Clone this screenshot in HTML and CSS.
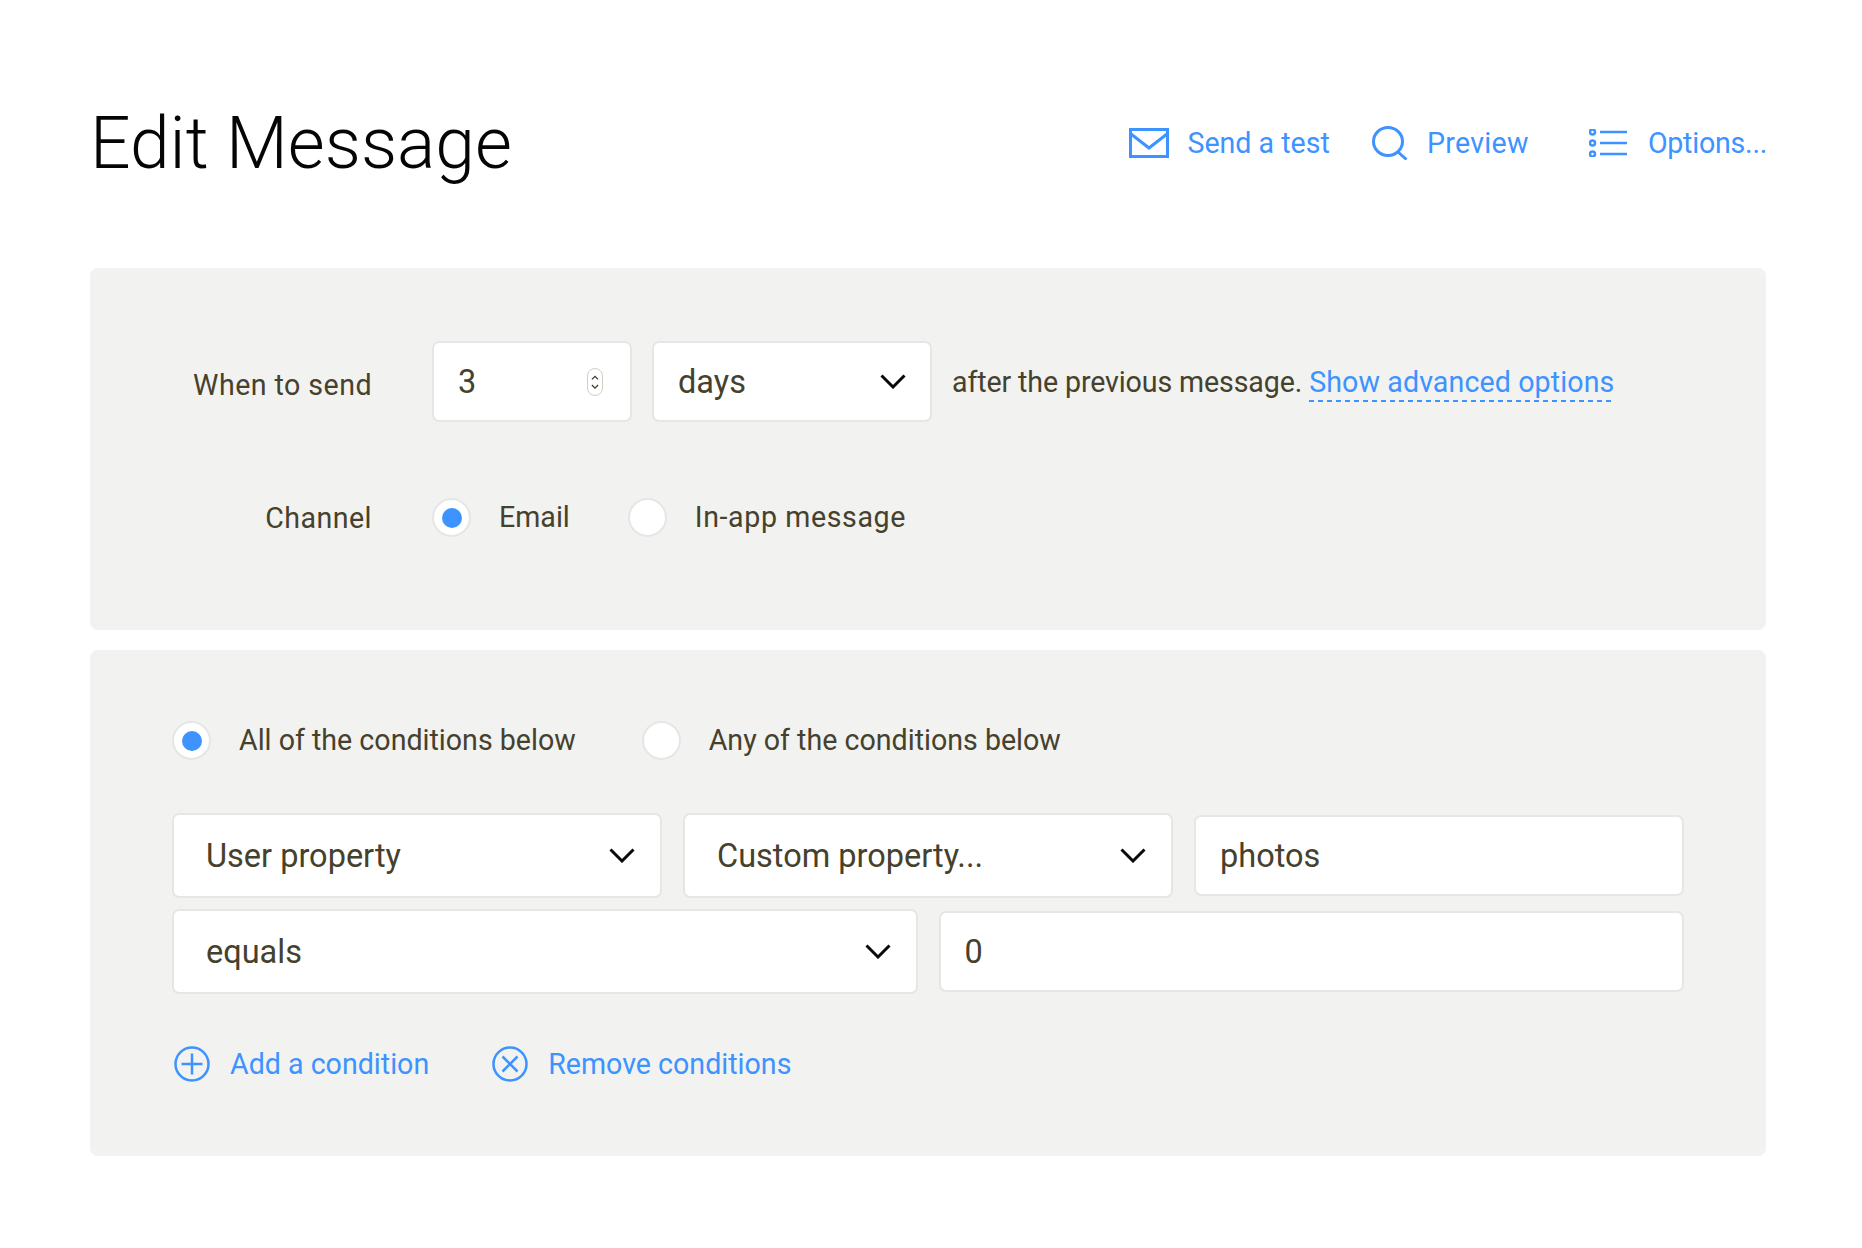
FILE: index.html
```html
<!DOCTYPE html>
<html lang="en">
<head>
<meta charset="utf-8">
<title>Edit Message</title>
<link rel="stylesheet" href="styles.css">
</head>
<body>
<main class="page">
  <header class="header">
    <h1 class="title">Edit Message</h1>
    <nav class="actions">
      <a class="action action-test">
        <svg class="icon-mail" viewBox="0 0 40 30" fill="none" stroke="currentColor" stroke-width="3"><rect x="1.500" y="1.500" width="37" height="27"/><path d="M2 6l18 14L38 6"/></svg>
        <span>Send a test</span>
      </a>
      <a class="action action-preview">
        <svg class="icon-search" viewBox="0 0 36 34" fill="none" stroke="currentColor" stroke-width="3"><ellipse cx="16" cy="15.500" rx="14.500" ry="14"/><path d="M26 26l8.500 7.500"/></svg>
        <span>Preview</span>
      </a>
      <a class="action action-options">
        <svg class="icon-list" viewBox="0 0 38 28" fill="none" stroke="currentColor" stroke-width="2.500"><circle cx="3.500" cy="3" r="2.500"/><circle cx="3.500" cy="14" r="2.500"/><circle cx="3.500" cy="25" r="2.500"/><path d="M11 3h27M11 14h27M11 25h27"/></svg>
        <span>Options...</span>
      </a>
    </nav>
  </header>

  <section class="panel panel-send">
    <div class="send-row">
      <div class="label label-top">When to send</div>
      <div class="control control-number">
        <span>3</span>
        <span class="spinner">
          <svg viewBox="0 0 16 28" fill="none" stroke="#3f3c28" stroke-width="1.500"><path d="M4.500 11L8 7.500l3.500 3.500M4.500 17.500L8 21l3.500-3.500"/></svg>
        </span>
      </div>
      <div class="control control-days">
        <span>days</span>
        <svg class="chevron" viewBox="0 0 26 15" fill="none" stroke="#0a0a0a" stroke-width="3"><path d="M1.500 1.500L13 13 24.500 1.500"/></svg>
      </div>
      <p class="sentence">after the previous message. <a class="adv-link">Show advanced options</a></p>
    </div>
    <div class="send-row channel-row">
      <div class="label">Channel</div>
      <div class="radio-group">
        <label class="radio-item"><span class="radio radio-on"></span><span class="radio-text">Email</span></label>
        <label class="radio-item"><span class="radio"></span><span class="radio-text wide-text">In-app message</span></label>
      </div>
    </div>
  </section>

  <section class="panel panel-conditions">
    <div class="radio-group match-group">
      <label class="radio-item"><span class="radio radio-on"></span><span class="radio-text">All of the conditions below</span></label>
      <label class="radio-item"><span class="radio"></span><span class="radio-text">Any of the conditions below</span></label>
    </div>
    <div class="field-row field-row-first">
      <div class="control select-large">
        <span>User property</span>
        <svg class="chevron" viewBox="0 0 26 15" fill="none" stroke="#0a0a0a" stroke-width="3"><path d="M1.500 1.500L13 13 24.500 1.500"/></svg>
      </div>
      <div class="control select-large">
        <span>Custom property...</span>
        <svg class="chevron" viewBox="0 0 26 15" fill="none" stroke="#0a0a0a" stroke-width="3"><path d="M1.500 1.500L13 13 24.500 1.500"/></svg>
      </div>
      <div class="control text-large">photos</div>
    </div>
    <div class="field-row field-row-second">
      <div class="control select-large">
        <span>equals</span>
        <svg class="chevron" viewBox="0 0 26 15" fill="none" stroke="#0a0a0a" stroke-width="3"><path d="M1.500 1.500L13 13 24.500 1.500"/></svg>
      </div>
      <div class="control text-large">0</div>
    </div>
    <div class="condition-actions">
      <a class="action condition-action">
        <svg class="icon-circle" viewBox="0 0 36 36" fill="none" stroke="currentColor" stroke-width="2.500"><circle cx="18" cy="18" r="16.500"/><path d="M7.500 18h21M18 7.500v21"/></svg>
        <span>Add a condition</span>
      </a>
      <a class="action condition-action">
        <svg class="icon-circle" viewBox="0 0 36 36" fill="none" stroke="currentColor" stroke-width="2.500"><circle cx="18" cy="18" r="16.500"/><path d="M10.500 10.500l15 15M25.500 10.500l-15 15"/></svg>
        <span>Remove conditions</span>
      </a>
    </div>
  </section>
</main>
</body>
</html>
```
FILE: styles.css
```css
* { box-sizing: border-box; }

body {
  margin: 0;
  background: #fff;
  color: #45412d;
  font-family: Roboto, "Liberation Sans", sans-serif;
  font-size: 28.6px;
  font-weight: 400;
  line-height: 34px;
}

.page {
  width: 1676px;
  margin-left: 90px;
}

.header {
  display: flex;
  align-items: center;
  justify-content: space-between;
  height: 80px;
  margin-top: 103px;
  margin-bottom: 85px;
}

.title {
  margin: 2px 0 0;
  color: #050505;
  font-size: 71.4px;
  font-weight: 300;
  line-height: 80px;
}

.actions {
  display: flex;
  align-items: center;
  margin-right: -1px;
}

.action {
  display: flex;
  align-items: center;
  color: #3d93ff;
}

.action-test { gap: 18px; }
.action-preview { gap: 19px; margin-left: 42px; letter-spacing: 0.3px; }
.action-options { gap: 21px; margin-left: 60px; letter-spacing: -0.24px; }

.icon-mail { width: 40px; height: 30px; }
.icon-search { width: 36px; height: 34px; }
.icon-list { width: 38px; height: 28px; }

.panel {
  background: #f2f2f0;
  border-radius: 8px;
}

.panel-send {
  height: 362px;
  padding-top: 73px;
  margin-bottom: 20px;
}

.panel-conditions {
  height: 506px;
  padding: 71px 82px 0;
}

.send-row {
  display: flex;
  align-items: center;
}

.channel-row { margin-top: 76px; }

.label {
  width: 282px;
  margin-right: 60px;
  text-align: right;
  letter-spacing: 0.45px;
}

.label-top { padding-top: 6px; }

.radio-text { padding-bottom: 2px; }

.wide-text { letter-spacing: 0.6px; }

.control {
  display: flex;
  align-items: center;
  justify-content: space-between;
  background: #fff;
  border: 2px solid #e6e6e6;
  border-radius: 7px;
  font-size: 32.5px;
}

.control-number {
  width: 200px;
  height: 81px;
  padding: 0 24px;
  margin-right: 20px;
}

.spinner {
  display: block;
  width: 16px;
  height: 28px;
  margin-right: 3px;
  border: 1px solid #cfcfc6;
  border-radius: 8px;
  background: #fff;
}

.spinner svg {
  display: block;
  width: 14px;
  height: 26px;
}

.control-days {
  width: 280px;
  height: 81px;
  padding: 0 24px;
  margin-right: 20px;
}

.chevron {
  width: 26px;
  height: 15px;
  flex: none;
}

.sentence {
  margin: 0;
  white-space: pre;
  letter-spacing: -0.12px;
}

.adv-link {
  padding-bottom: 3px;
  color: #3d93ff;
  letter-spacing: 0.1px;
  background: linear-gradient(to right, #3d93ff 5px, transparent 5px) left bottom / 9px 2px repeat-x;
}

.radio-group {
  display: flex;
  align-items: center;
  gap: 58px;
}

.radio-item {
  display: flex;
  align-items: center;
  gap: 28px;
}

.radio {
  display: flex;
  align-items: center;
  justify-content: center;
  width: 39px;
  height: 39px;
  background: #fff;
  border: 2px solid #e6e6e6;
  border-radius: 50%;
}

.radio-on::after {
  content: "";
  width: 20px;
  height: 20px;
  background: #3d93ff;
  border-radius: 50%;
}

.match-group { gap: 66px; }

.field-row {
  display: grid;
  align-items: center;
  gap: 21px;
  margin-top: 11px;
}

.field-row-first {
  grid-template-columns: repeat(3, 1fr);
  margin-top: 53px;
}

.field-row-second { grid-template-columns: repeat(2, 1fr); }

.select-large {
  height: 85px;
  padding: 0 25px 0 32px;
}

.text-large {
  height: 81px;
  justify-content: flex-start;
  padding: 0 24px;
}

.condition-actions {
  display: flex;
  align-items: center;
  gap: 63px;
  margin-top: 52px;
  padding-left: 2px;
}

.condition-action { gap: 20px; }

.icon-circle { width: 36px; height: 36px; }
```
